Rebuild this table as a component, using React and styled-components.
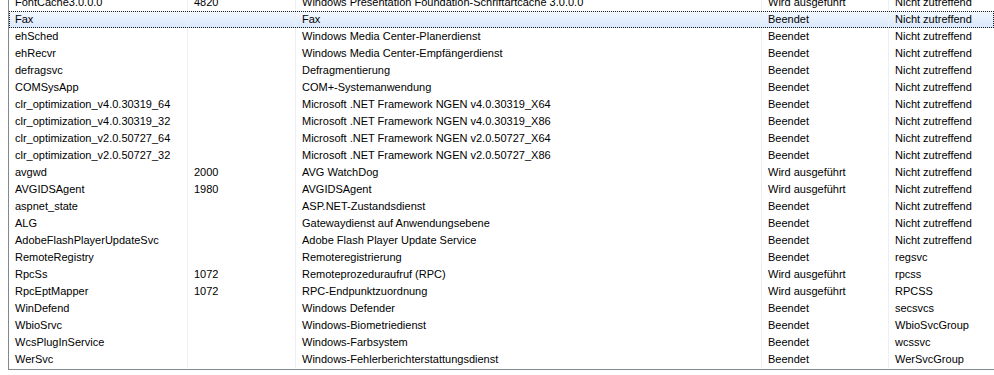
import React from "react";
import styled, { createGlobalStyle } from "styled-components";

const GlobalStyle = createGlobalStyle`
  html, body {
    margin: 0;
    padding: 0;
    background: #fff;
  }
  body {
    font-family: "Liberation Sans", Arial, sans-serif;
  }
`;

const services = [
  ["FontCache3.0.0.0", "4820", "Windows Presentation Foundation-Schriftartcache 3.0.0.0", "Wird ausgeführt", "Nicht zutreffend"],
  ["Fax", "", "Fax", "Beendet", "Nicht zutreffend"],
  ["ehSched", "", "Windows Media Center-Planerdienst", "Beendet", "Nicht zutreffend"],
  ["ehRecvr", "", "Windows Media Center-Empfängerdienst", "Beendet", "Nicht zutreffend"],
  ["defragsvc", "", "Defragmentierung", "Beendet", "Nicht zutreffend"],
  ["COMSysApp", "", "COM+-Systemanwendung", "Beendet", "Nicht zutreffend"],
  ["clr_optimization_v4.0.30319_64", "", "Microsoft .NET Framework NGEN v4.0.30319_X64", "Beendet", "Nicht zutreffend"],
  ["clr_optimization_v4.0.30319_32", "", "Microsoft .NET Framework NGEN v4.0.30319_X86", "Beendet", "Nicht zutreffend"],
  ["clr_optimization_v2.0.50727_64", "", "Microsoft .NET Framework NGEN v2.0.50727_X64", "Beendet", "Nicht zutreffend"],
  ["clr_optimization_v2.0.50727_32", "", "Microsoft .NET Framework NGEN v2.0.50727_X86", "Beendet", "Nicht zutreffend"],
  ["avgwd", "2000", "AVG WatchDog", "Wird ausgeführt", "Nicht zutreffend"],
  ["AVGIDSAgent", "1980", "AVGIDSAgent", "Wird ausgeführt", "Nicht zutreffend"],
  ["aspnet_state", "", "ASP.NET-Zustandsdienst", "Beendet", "Nicht zutreffend"],
  ["ALG", "", "Gatewaydienst auf Anwendungsebene", "Beendet", "Nicht zutreffend"],
  ["AdobeFlashPlayerUpdateSvc", "", "Adobe Flash Player Update Service", "Beendet", "Nicht zutreffend"],
  ["RemoteRegistry", "", "Remoteregistrierung", "Beendet", "regsvc"],
  ["RpcSs", "1072", "Remoteprozeduraufruf (RPC)", "Wird ausgeführt", "rpcss"],
  ["RpcEptMapper", "1072", "RPC-Endpunktzuordnung", "Wird ausgeführt", "RPCSS"],
  ["WinDefend", "", "Windows Defender", "Beendet", "secsvcs"],
  ["WbioSrvc", "", "Windows-Biometriedienst", "Beendet", "WbioSvcGroup"],
  ["WcsPlugInService", "", "Windows-Farbsystem", "Beendet", "wcssvc"],
  ["WerSvc", "", "Windows-Fehlerberichterstattungsdienst", "Beendet", "WerSvcGroup"],
];

const COLS = "179px 108px 466px 127px 1fr";

// list view frame, the top row is scrolled partly out of view
const Frame = styled.div`
  margin-left: 8px;
  width: 985px;
  height: 369px;
  border-left: 1px solid #828790;
  border-bottom: 1px solid #828790;
  overflow: hidden;
  background: #fff;
`;

const List = styled.div`
  margin-top: -6px;
  display: flex;
  flex-direction: column;
`;

const Row = styled.div`
  display: grid;
  grid-template-columns: ${COLS};
  height: 17px;
  box-sizing: border-box;
  ${(p) =>
    p.$selected &&
    `
    background: linear-gradient(#f3f8fe, #d8e8fc);
    outline: 1px dotted #1a1a1a;
    outline-offset: -1px;
  `}
`;

const Cell = styled.div`
  padding-left: 6px;
  font-size: 11px;
  line-height: 17px;
  color: #000;
  white-space: nowrap;
  overflow: hidden;
  border-right: 1px solid #eeeff2;
  &:last-child {
    border-right: none;
  }
`;

export default function App() {
  return (
    <>
      <GlobalStyle />
      <Frame>
        <List>
          {services.map((s, i) => (
            <Row key={s[0]} $selected={i === 1}>
              {s.map((v, j) => (
                <Cell key={j}>{v}</Cell>
              ))}
            </Row>
          ))}
        </List>
      </Frame>
    </>
  );
}
